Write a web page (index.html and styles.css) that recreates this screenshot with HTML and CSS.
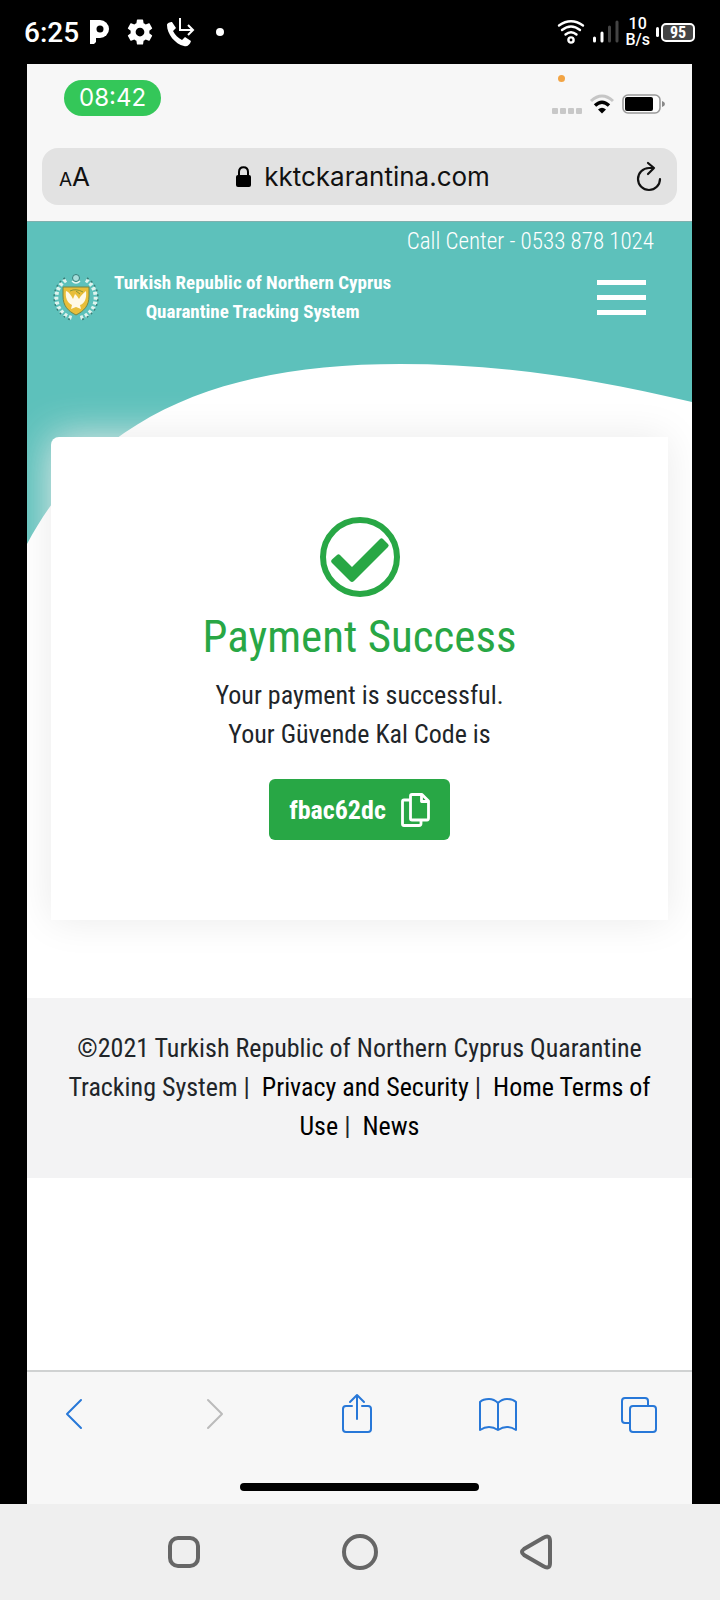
FILE: index.html
```html
<!DOCTYPE html>
<html lang="en">
<head>
<meta charset="utf-8">
<meta name="viewport" content="width=device-width, initial-scale=1">
<title>Payment Success</title>
<link rel="stylesheet" href="styles.css">
</head>
<body>
<div class="device">
  <header class="system-bar">
    <div class="system-left">
      <time class="system-time">6:25</time>
      <svg width="20" height="24" viewBox="0 0 20 24" aria-hidden="true"><path d="M0 0H10V18H6V22L4 24H0Z" fill="#fff"/><circle cx="10" cy="9" r="9" fill="#fff"/><circle cx="10" cy="9" r="3.500"/></svg>
      <svg class="gear" width="30" height="30" viewBox="0 0 24 24" aria-hidden="true"><path fill="#fff" d="M19.43 12.98c.04-.32.07-.64.07-.98s-.03-.66-.07-.98l2.11-1.65c.19-.15.24-.42.12-.64l-2-3.46c-.12-.22-.39-.3-.61-.22l-2.49 1c-.52-.4-1.080-.73-1.690-.98l-.38-2.650C14.460 2.180 14.250 2 14 2h-4c-.25 0-.46.18-.49.42l-.38 2.650c-.61.25-1.170.59-1.690.98l-2.490-1c-.23-.09-.49 0-.61.22l-2 3.460c-.13.22-.07.49.12.64l2.110 1.650c-.04.32-.07.65-.07.98s.03.66.07.98l-2.110 1.650c-.19.15-.24.42-.12.64l2 3.460c.12.22.39.3.61.22l2.490-1c.52.4 1.080.73 1.690.98l.38 2.650c.03.24.24.42.49.42h4c.25 0 .46-.18.49-.42l.38-2.650c.61-.25 1.170-.59 1.690-.98l2.490 1c.23.09.49 0 .61-.22l2-3.460c.12-.22.07-.49-.12-.64l-2.110-1.650zM12 15.500c-1.930 0-3.500-1.570-3.500-3.500s1.570-3.500 3.500-3.500 3.500 1.570 3.500 3.500-1.570 3.500-3.500 3.500z"/></svg>
      <svg width="29" height="30" viewBox="0 0 29 30" aria-hidden="true"><path fill="#fff" d="M1 8C1 6 4 5 6 5L10 11L7 14C9 18 12 21 16 23L19 20L25 24C24 28 21 30 18 29C9 27 1 17 1 8Z"/><path d="M14 1V13H27M22 8L27 13L22 18" fill="none" stroke="#fff" stroke-width="2"/></svg>
      <span class="system-dot"></span>
    </div>
    <div class="system-right">
      <svg width="28" height="26" viewBox="0 0 28 26" fill="none" stroke="#fff" stroke-width="2.400" stroke-linecap="round" aria-hidden="true"><path d="M2 6.500Q14-2 26 6.500M5 11Q14 4 23 11M8.500 15.500Q14 11 19.500 15.500"/><circle cx="14" cy="21" r="2.600"/></svg>
      <svg width="28" height="24" viewBox="0 0 28 24" aria-hidden="true"><path d="M3.500 18V21M11 13V21" stroke="#fff" stroke-width="3" stroke-linecap="round"/><path d="M18.500 7V21M26 2V21" stroke="#444" stroke-width="3" stroke-linecap="round"/></svg>
      <span class="net-speed">10<br>B/s</span>
      <span class="system-battery"><span class="battery-level">95</span></span>
    </div>
  </header>

  <div class="phone">
    <div class="phone-status">
      <time class="call-time">08:42</time>
      <div class="phone-icons">
        <i class="mic-dot"></i>
        <svg class="cell-dots" width="30" height="6" viewBox="0 0 30 6" fill="#c8c8c8" aria-hidden="true"><rect width="6" height="6" rx="1"/><rect x="8" width="6" height="6" rx="1"/><rect x="16" width="6" height="6" rx="1"/><rect x="24" width="6" height="6" rx="1"/></svg>
        <svg width="26" height="20" viewBox="0 0 26 20" fill="none" aria-hidden="true"><path d="M2 7Q13-3 24 7" stroke="#c6c6c6" stroke-width="3"/><path d="M6 11.500Q13 5 20 11.500" stroke="#000" stroke-width="3.400"/><path d="M9 15.500Q13 12 17 15.500L13 19.500Z" fill="#000"/></svg>
        <svg width="43" height="20" viewBox="0 0 43 20" aria-hidden="true"><rect x="1" y="1" width="37" height="18" rx="5" fill="#fcfcfc" stroke="#999" stroke-width="1.600"/><rect x="3" y="3" width="28" height="14" rx="2"/><path d="M40 7Q43 8 43 10T40 13Z" fill="#888"/></svg>
      </div>
    </div>
    <div class="address-area">
      <div class="address-bar">
        <button class="text-size" type="button" aria-label="Text size"><span class="small-a">A</span>A</button>
        <button class="site" type="button">
          <svg width="15" height="21" viewBox="0 0 15 21" aria-hidden="true"><rect y="9" width="15" height="12" rx="2"/><path d="M3 10V6Q3 1.200 7.500 1.200T12 6V10" fill="none" stroke="#000" stroke-width="2"/></svg>
          kktckarantina.com
        </button>
        <button type="button" aria-label="Reload">
          <svg width="26" height="30" viewBox="0 0 26 30" fill="none" stroke="#111" stroke-width="2.200" stroke-linecap="round" stroke-linejoin="round" aria-hidden="true"><path d="M24 17A11 11 0 1 1 13 6H18M12 1L18 6L12 12"/></svg>
        </button>
      </div>
    </div>

    <div class="page">
      <svg class="wave" viewBox="0 0 665 322" preserveAspectRatio="none" aria-hidden="true"><path fill="#5dc1bb" d="M0 0H665V180C560 155 470 142 373 142C200 142 70 190 0 322Z"/></svg>
      <header class="site-header">
        <p class="call-center">Call Center - 0533 878 1024</p>
        <div class="brand-row">
          <a class="brand" href="#">
            <svg width="48" height="50" viewBox="0 0 48 50" aria-hidden="true">
              <g fill="none" stroke="#dff3ee" stroke-width="4" stroke-dasharray="3 2"><path d="M14 8A21 21 0 0 0 20 46"/><path d="M34 8A21 21 0 0 1 28 46"/></g>
              <g fill="none" stroke="#397f78" stroke-width="1.500" stroke-dasharray="2 3"><path d="M13 6A23 23 0 0 0 20 48"/><path d="M35 6A23 23 0 0 1 28 48"/></g>
              <circle cx="24" cy="6" r="3.500" fill="#a8dedb" stroke="#367f7b"/><path d="M20 9Q24 13 28 9" fill="none" stroke="#e8f7f3" stroke-width="1.500"/>
              <path d="M11 15H37V24C37 34 32 39 24 43C16 39 11 34 11 24Z" fill="#e8be3a" stroke="#748645"/>
              <path d="M14 19C17 20 19 23 21 27L23 22L25 24L27 27C29 23 32 21 34 19C35 27 32 32 28 33L29 37L24 35L19 37L20 33C15 31 13 25 14 19Z" fill="#fff9e6"/><path d="M18 19Q24 16 31 20M24 19L28 22" fill="none" stroke="#889434"/>
            </svg>
            <span class="brand-name">Turkish Republic of Northern Cyprus<br>Quarantine Tracking System</span>
          </a>
          <button class="menu" type="button" aria-label="Menu"><span></span><span></span><span></span></button>
        </div>
      </header>

      <main class="card">
        <svg width="80" height="80" viewBox="0 0 80 80" aria-hidden="true"><circle cx="40" cy="40" r="37" fill="none" stroke="#28a745" stroke-width="6"/><path d="M12.500 42L17 38Q18.500 36.500 20 38L32 50L60 22Q61.500 20.500 63 22L68 27Q69.500 28.500 68 30L34 64Q32 66 30 64L12 46Q10 44 12.500 42Z" fill="#28a745"/></svg>
        <h1 class="title">Payment Success</h1>
        <p class="message">Your payment is successful.<br>Your Güvende Kal Code is</p>
        <button class="code" type="button">fbac62dc
          <svg width="29" height="34" viewBox="0 0 29 34" fill="none" stroke="#fff" stroke-width="2.800" stroke-linejoin="round" aria-hidden="true"><path d="M9 7H3Q1.500 7 1.500 8.500V31Q1.500 32.500 3 32.500H18Q20 32.500 20 30.500V27"/><path d="M11 1.500H21L27.500 8V25Q27.500 27 26 27H11Q9.500 27 9.500 25.500V3Q9.500 1.500 11 1.500Z"/><path d="M20.500 2V8.500H27"/></svg>
        </button>
      </main>

      <footer class="footer">©2021 Turkish Republic of Northern Cyprus Quarantine Tracking System |&nbsp; <a href="#">Privacy and Security</a> |&nbsp; <a href="#">Home</a> <a href="#">Terms of Use</a> |&nbsp; <a href="#">News</a></footer>
    </div>

    <div class="browser-bar">
      <nav class="browser-tools" aria-label="Browser">
        <button class="tool" type="button" aria-label="Back"><svg width="18" height="40" viewBox="0 0 18 40"><path d="M16 6L2 20L16 34"/></svg></button>
        <button class="tool muted" type="button" aria-label="Forward"><svg width="18" height="40" viewBox="0 0 18 40"><path d="M2 6L16 20L2 34"/></svg></button>
        <button class="tool" type="button" aria-label="Share"><svg width="32" height="40" viewBox="0 0 32 40"><path d="M11 12H5Q2 12 2 15V35Q2 38 5 38H27Q30 38 30 35V15Q30 12 27 12H21M16 25V1M9 8L16 1L23 8"/></svg></button>
        <button class="tool" type="button" aria-label="Bookmarks"><svg width="40" height="40" viewBox="0 0 40 40"><path d="M20 9Q16 5 11 5Q5 5 2 8V36Q11 30 20 36Q29 30 38 36V8Q35 5 29 5Q24 5 20 9ZM20 9V36"/></svg></button>
        <button class="tool" type="button" aria-label="Tabs"><svg width="38" height="40" viewBox="0 0 38 40"><path d="M10 29H5Q2 29 2 26V7Q2 4 5 4H25Q28 4 28 7V12"/><rect x="10" y="12" width="26" height="26" rx="3"/></svg></button>
      </nav>
      <div class="home-bar"></div>
    </div>
  </div>

  <nav class="system-nav" aria-label="System">
    <button class="nav-button" type="button" aria-label="Recent apps"><svg width="36" height="36" viewBox="0 0 36 36"><rect x="4" y="4" width="28" height="28" rx="8"/></svg></button>
    <button class="nav-button" type="button" aria-label="Home"><svg width="36" height="36" viewBox="0 0 36 36"><circle cx="18" cy="18" r="16"/></svg></button>
    <button class="nav-button" type="button" aria-label="Back"><svg width="36" height="36" viewBox="0 0 36 36"><path d="M25 4Q32 0 32 7V29Q32 36 25 32L6 21Q2 18 6 15Z"/></svg></button>
  </nav>
</div>
</body>
</html>
```
FILE: styles.css
```css
* { box-sizing: border-box; }

body {
  margin: 0;
  background: #000;
  font-family: "Roboto Condensed", "Liberation Sans Narrow", Roboto, sans-serif;
}

button {
  padding: 0;
  border: 0;
  background: none;
  color: inherit;
  font: inherit;
}

svg { display: block; flex: none; overflow: visible; }

a { color: inherit; text-decoration: none; }

p, h1 { margin: 0; }

.device {
  display: flex;
  flex-direction: column;
  min-height: 100vh;
}

.system-bar {
  display: flex;
  justify-content: space-between;
  align-items: center;
  height: 64px;
  padding: 0 25px 0 24px;
  color: #fff;
  font-family: Roboto, sans-serif;
}

.system-left, .system-right { display: flex; align-items: center; }
.system-left { gap: 11px; }
.system-right { gap: 6px; }
.system-time { font-size: 28px; font-weight: 500; }
.gear { margin-left: 4px; }
.system-dot { width: 8px; height: 8px; margin-left: 10px; border-radius: 50%; background: #fff; }
.net-speed { font-size: 16px; line-height: 16px; font-weight: 500; text-align: center; }

.system-battery { display: flex; align-items: center; gap: 2px; }
.system-battery::before { content: ""; width: 3px; height: 10px; border-radius: 2px; background: #fff; }
.battery-level {
  width: 34px;
  border: 2px solid #fff;
  border-radius: 5px;
  background: #444;
  font-family: "Roboto Condensed", Roboto, sans-serif;
  font-size: 16px;
  font-weight: 700;
  line-height: 15px;
  text-align: center;
}

.phone {
  flex: 1;
  display: flex;
  flex-direction: column;
  margin: 0 28px 0 27px;
  background: #fff;
}

.phone-status {
  display: flex;
  justify-content: space-between;
  align-items: flex-start;
  height: 84px;
  padding: 16px 27px 0 37px;
  background: #f7f7f7;
}

.call-time {
  padding: 0 15px;
  border-radius: 18px;
  background: #34c759;
  color: #fff;
  font: 24px/36px Inter, sans-serif;
}

.phone-icons { position: relative; display: flex; align-items: center; gap: 7px; padding-top: 14px; }
.cell-dots { align-self: flex-end; }
.mic-dot { position: absolute; left: 6px; top: -5px; width: 7px; height: 7px; border-radius: 50%; background: #f2a444; }

.address-area {
  padding: 0 15px 16px;
  background: #f7f7f7;
  font-family: Inter, sans-serif;
}

.address-bar {
  display: flex;
  justify-content: space-between;
  align-items: center;
  height: 57px;
  padding: 0 15px 0 17px;
  border-radius: 16px;
  background: #e2e2e2;
  color: #111;
}

.text-size { font-size: 26px; }
.small-a { font-size: 19px; }
.site { display: flex; align-items: center; gap: 13px; font-size: 26px; }

.page {
  position: relative;
  flex: 1;
  overflow: hidden;
  border-top: 1px solid #7fb0ae;
}

.wave { position: absolute; top: 0; left: 0; width: 100%; height: 322px; }

.site-header { position: relative; height: 215px; padding: 4px 38px 0 25px; color: #fff; }
.call-center { font-size: 23px; line-height: 32px; font-weight: 300; text-align: right; }
.brand-row { display: flex; justify-content: space-between; align-items: center; padding: 10px 8px 0 0; }
.brand { display: flex; align-items: center; gap: 14px; }
.brand-name { font-size: 19px; line-height: 29px; font-weight: 700; text-align: center; }
.menu { display: grid; gap: 10px; width: 49px; }
.menu span { height: 5px; background: #fff; }

.card {
  position: relative;
  display: flex;
  flex-direction: column;
  align-items: center;
  margin: 0 24px;
  padding: 80px 16px;
  border-radius: 8px 0 0 0;
  background: #fff;
  box-shadow: 0 0 40px #eaeaea;
  color: #212529;
  text-align: center;
}

.title { margin: 13px 0 12px; color: #28a745; font-size: 45px; line-height: 54px; font-weight: 400; }
.message { font-size: 26px; line-height: 39px; }

.code {
  display: flex;
  align-items: center;
  gap: 15px;
  height: 61px;
  margin-top: 25px;
  padding: 0 20px;
  border-radius: 6px;
  background: #28a745;
  color: #fff;
  font-size: 26px;
  font-weight: 700;
}

.footer {
  margin-top: 78px;
  padding: 31px 40px 32px;
  background: #f3f3f4;
  color: #212529;
  font-size: 26px;
  line-height: 39px;
  text-align: center;
}

.footer a { color: #000; }

.browser-bar {
  height: 134px;
  padding-top: 22px;
  border-top: 2px solid #d0d2d2;
  background: #f7f7f7;
}

.browser-tools { display: flex; justify-content: space-between; padding: 0 33px 0 27px; }
.tool { display: flex; justify-content: center; width: 40px; color: #2878d8; }
.muted { color: #bbb; }
.tool svg { fill: none; stroke: currentColor; stroke-width: 2; stroke-linecap: round; stroke-linejoin: round; }
.home-bar { width: 36%; height: 8px; margin: 49px auto 0; border-radius: 4px; background: #000; }

.system-nav {
  display: flex;
  justify-content: center;
  align-items: center;
  gap: 140px;
  height: 96px;
  background: #efefef;
}

.nav-button svg { fill: none; stroke: #666; stroke-width: 4; }
```
